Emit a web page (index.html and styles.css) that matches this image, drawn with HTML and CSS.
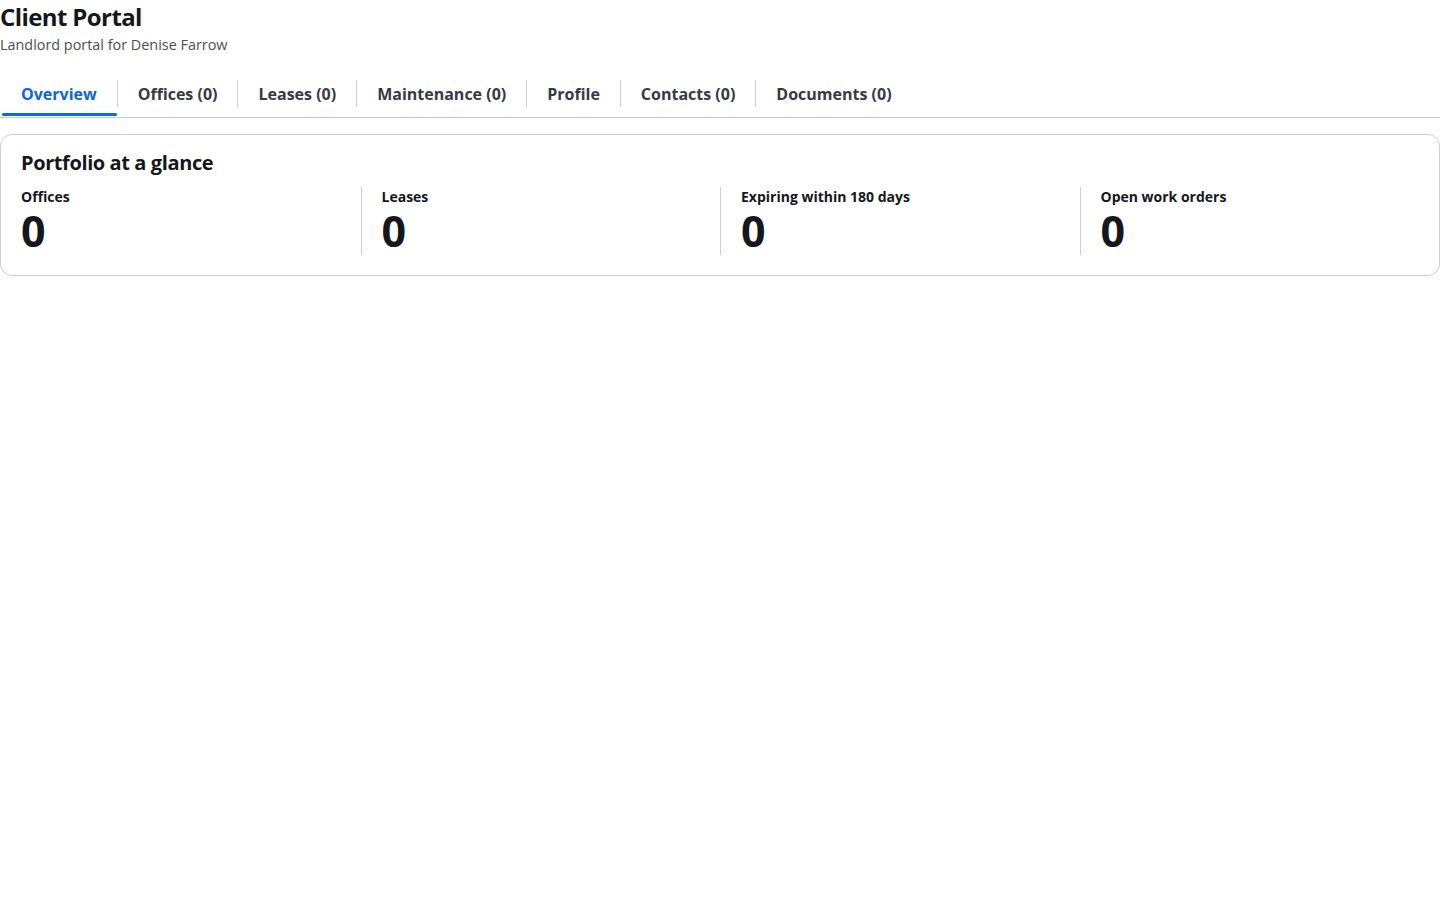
FILE: index.html
```html
<!DOCTYPE html>
<html lang="en">
<head>
  <meta charset="UTF-8">
  <meta name="viewport" content="width=device-width, initial-scale=1.0">
  <title>Client Portal</title>
  <link rel="stylesheet" href="styles.css">
</head>
<body>
  <header class="page-header">
    <h1>Client Portal</h1>
    <p class="subtitle">Landlord portal for Denise Farrow</p>
  </header>

  <nav class="tabs">
    <a class="tab active" href="#">Overview</a>
    <a class="tab" href="#">Offices (0)</a>
    <a class="tab" href="#">Leases (0)</a>
    <a class="tab" href="#">Maintenance (0)</a>
    <a class="tab" href="#">Profile</a>
    <a class="tab" href="#">Contacts (0)</a>
    <a class="tab" href="#">Documents (0)</a>
  </nav>

  <section class="card">
    <h2>Portfolio at a glance</h2>
    <div class="stats">
      <div class="stat">
        <div class="stat-label">Offices</div>
        <div class="stat-value">0</div>
      </div>
      <div class="stat">
        <div class="stat-label">Leases</div>
        <div class="stat-value">0</div>
      </div>
      <div class="stat">
        <div class="stat-label">Expiring within 180 days</div>
        <div class="stat-value">0</div>
      </div>
      <div class="stat">
        <div class="stat-label">Open work orders</div>
        <div class="stat-value">0</div>
      </div>
    </div>
  </section>
</body>
</html>
```

FILE: styles.css
```css
body {
  font-family: "Open Sans", "Noto Sans", Arial, sans-serif;
  margin: 0;
  background: #fff;
  color: #14171c;
}

.page-header h1 {
  margin: 0;
  font-size: 24px;
  line-height: 33px;
  font-weight: 700;
  letter-spacing: -0.6px;
}

.subtitle {
  margin: 2px 0 0;
  font-size: 14.4px;
  line-height: 20px;
  color: #4a4f57;
}

.tabs {
  display: flex;
  margin-top: 24px;
  padding-left: 2px;
  border-bottom: 1px solid #c8c8c8;
}

.tab {
  position: relative;
  padding: 4px 20px 12px 19px;
  font-size: 16px;
  line-height: 22px;
  font-weight: 700;
  color: #353a45;
  text-decoration: none;
}

.tab + .tab {
  padding-left: 21px;
}

/* short divider between tabs */
.tab + .tab::before {
  content: "";
  position: absolute;
  left: 0;
  top: 1px;
  width: 1px;
  height: 27px;
  background: #cfcfcf;
}

.tab.active {
  color: #0a66d8;
}

.tab.active::after {
  content: "";
  position: absolute;
  left: 0;
  right: 0;
  bottom: 1px;
  height: 3px;
  border-radius: 2px;
  background: #0a6ae0;
}

.card {
  margin-top: 16px;
  border: 1px solid #cdcdd2;
  border-radius: 12px;
  padding: 14px 0 20px;
}

.card h2 {
  margin: 0 20px 10px;
  font-size: 20px;
  line-height: 28px;
  font-weight: 700;
  letter-spacing: -0.4px;
}

.stats {
  display: grid;
  grid-template-columns: repeat(4, 1fr);
}

.stat {
  padding: 0 20px;
}

.stat + .stat {
  border-left: 1px solid #cfcfcf;
}

.stat-label {
  font-size: 14px;
  line-height: 20px;
  font-weight: 700;
}

.stat-value {
  font-size: 43px;
  line-height: 48px;
  font-weight: 700;
}
```
